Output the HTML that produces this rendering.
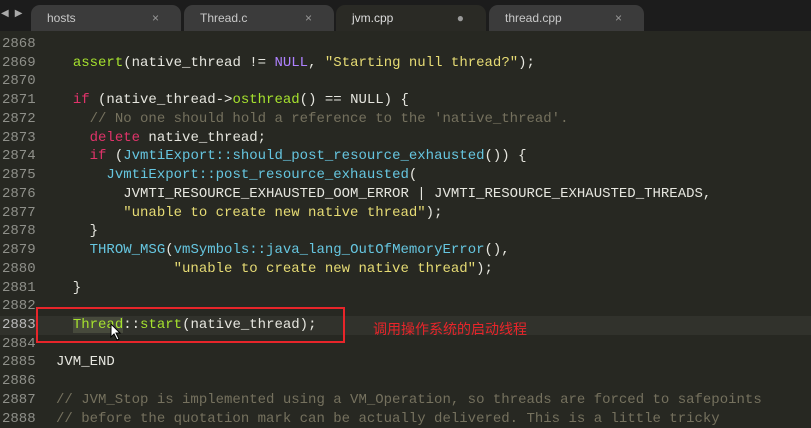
<!DOCTYPE html>
<html><head><meta charset="utf-8"><style>
body{margin:0;width:811px;height:413px;overflow:hidden;background:#272822;font-family:"Liberation Mono",monospace;position:relative}
#tabs{position:absolute;left:0;top:0;width:811px;height:31px;background:#1c1c1c;}
.tab{position:absolute;top:5px;height:26px;background:#3b3b3b;border-radius:9px 9px 0 0;color:#c8c8c8;font:12px "Liberation Sans",sans-serif;line-height:26px;}
.tab span{position:absolute;left:16px}
.tab i{position:absolute;right:22px;font-style:normal;color:#999;font-size:12px}
.act{background:#2a2a25;color:#ddd}
#code{position:absolute;left:0;top:35px;width:811px}
.l{height:18.74px;line-height:18.74px;font-size:14px;white-space:pre;color:#e6e6df;}
.n{display:inline-block;width:56px;color:#8f908a;padding-left:2px;box-sizing:border-box}
.k{color:#e0336a}.f{color:#a6e22e}.s{color:#e6db74}.c{color:#75715e}.p{color:#ae81ff}.b{color:#66c6e0}
.hl{background:#31322c}
</style></head><body>
<div id="tabs">
<div style="position:absolute;left:1px;top:8px;color:#aaa;font-size:10px">◀ ▶</div>
<div class="tab" style="left:31px;width:150px"><span>hosts</span><i>×</i></div>
<div class="tab" style="left:184px;width:150px"><span>Thread.c</span><i>×</i></div>
<div class="tab act" style="left:336px;width:150px"><span>jvm.cpp</span><i>●</i></div>
<div class="tab" style="left:489px;width:155px"><span>thread.cpp</span><i>×</i></div>
</div>
<div id="code">
<div class="l"><span class="n">2868</span></div>
<div class="l"><span class="n">2869</span>  <span class="f">assert</span>(native_thread != <span class="p">NULL</span>, <span class="s">"Starting null thread?"</span>);</div>
<div class="l"><span class="n">2870</span></div>
<div class="l"><span class="n">2871</span>  <span class="k">if</span> (native_thread-&gt;<span class="f">osthread</span>() == NULL) {</div>
<div class="l"><span class="n">2872</span>    <span class="c">// No one should hold a reference to the 'native_thread'.</span></div>
<div class="l"><span class="n">2873</span>    <span class="k">delete</span> native_thread;</div>
<div class="l"><span class="n">2874</span>    <span class="k">if</span> (<span class="b">JvmtiExport::should_post_resource_exhausted</span>()) {</div>
<div class="l"><span class="n">2875</span>      <span class="b">JvmtiExport::post_resource_exhausted</span>(</div>
<div class="l"><span class="n">2876</span>        JVMTI_RESOURCE_EXHAUSTED_OOM_ERROR | JVMTI_RESOURCE_EXHAUSTED_THREADS,</div>
<div class="l"><span class="n">2877</span>        <span class="s">"unable to create new native thread"</span>);</div>
<div class="l"><span class="n">2878</span>    }</div>
<div class="l"><span class="n">2879</span>    <span class="b">THROW_MSG</span>(<span class="b">vmSymbols::java_lang_OutOfMemoryError</span>(),</div>
<div class="l"><span class="n">2880</span>              <span class="s">"unable to create new native thread"</span>);</div>
<div class="l"><span class="n">2881</span>  }</div>
<div class="l"><span class="n">2882</span></div>
<div class="l hl"><span class="n" style="color:#bbb">2883</span>  <span class="f" style="background:#474a3c">Thread</span>::<span class="f">start</span>(native_thread);</div>
<div class="l"><span class="n">2884</span></div>
<div class="l"><span class="n">2885</span>JVM_END</div>
<div class="l"><span class="n">2886</span></div>
<div class="l"><span class="n">2887</span><span class="c">// JVM_Stop is implemented using a VM_Operation, so threads are forced to safepoints</span></div>
<div class="l"><span class="n">2888</span><span class="c">// before the quotation mark can be actually delivered. This is a little tricky</span></div>
</div>
<div style="position:absolute;left:36px;top:307px;width:305px;height:32px;border:2px solid #e8252a"></div>
<div style="position:absolute;left:373px;top:319px;color:#e8252a;font:14px 'Liberation Sans','Noto Sans CJK SC',sans-serif">调用操作系统的启动线程</div>
<svg style="position:absolute;left:110px;top:323px" width="12" height="18"><path d="M1 1 L1 14 L4 11 L7 17 L9 16 L6 10 L10 10 Z" fill="#fff" stroke="#000" stroke-width="1"/></svg>
</body></html>
